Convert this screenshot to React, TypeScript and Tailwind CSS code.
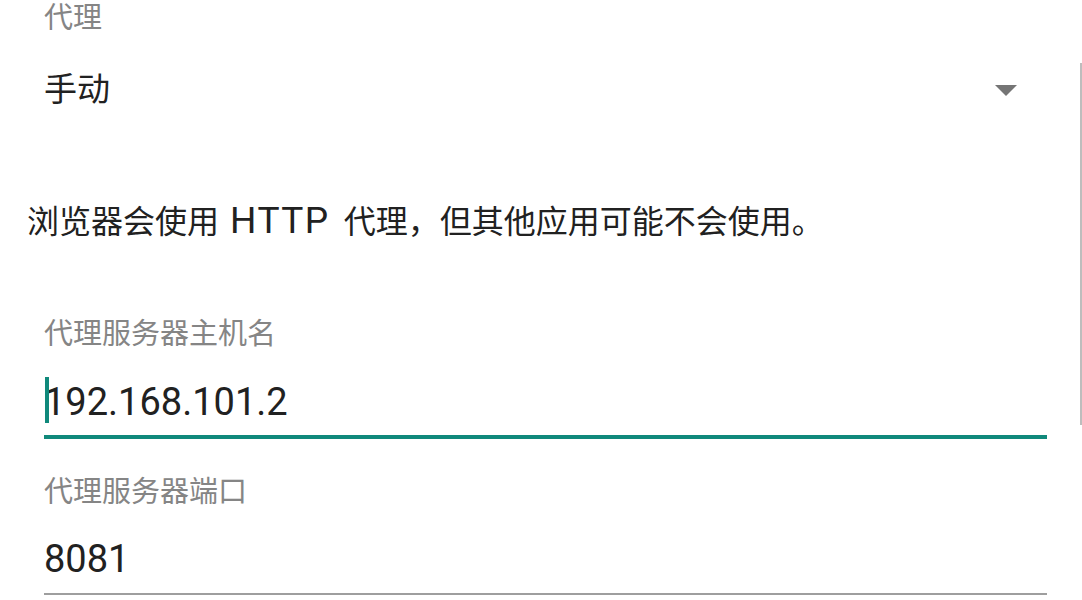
export default function App() {
  return (
    <div className="relative h-[600px] w-[1082px] overflow-hidden bg-white font-['Roboto','Noto_Sans_CJK_SC',sans-serif] text-[#212121]">
      {/* scrollbar */}
      <div className="absolute right-0 top-[63px] h-[362px] w-[2px] bg-[#bdbdbd]" />

      {/* spinner */}
      <div className="flex flex-col pl-[44px] pr-[35px]">
        <div className="h-[36px] text-[29px] leading-[36px] text-[#858585]">代理</div>
        <div className="flex h-[108px] items-center justify-between">
          <span className="text-[33px] leading-[44px]">手动</span>
          <svg width="22" height="11" viewBox="0 0 22 11" className="mr-[30px]">
            <path d="M0 0 L22 0 L11 11 Z" fill="#757575" />
          </svg>
        </div>
      </div>

      {/* summary */}
      <p className="mt-[55px] h-[44px] pl-[27px] text-[32px] leading-[44px]">
        浏览器会使用<span className="ml-[11px] mr-[14px] text-[37px] tracking-[1.5px]">HTTP</span>代理，但其他应用可能不会使用。
      </p>

      {/* host */}
      <div className="flex flex-col pl-[44px] pr-[35px]">
        <div className="mt-[71px] h-[40px] text-[29px] leading-[40px] text-[#858585]">代理服务器主机名</div>
        <div className="relative mt-[23px] h-[58px]">
          <div className="absolute left-[1px] top-0 h-[46px] w-[4px] bg-[#10897b]" />
          <span className="block text-[38px] leading-[51px]">192.168.101.2</span>
        </div>
        <div className="h-[4px] bg-[#10897b]" />

        {/* port */}
        <div className="mt-[33px] h-[40px] text-[29px] leading-[40px] text-[#858585]">代理服务器端口</div>
        <div className="mt-[24px] h-[46px] text-[38px] leading-[46px]">8081</div>
        <div className="mt-[11px] h-[2px] bg-[#9e9e9e]" />
      </div>
    </div>
  );
}
